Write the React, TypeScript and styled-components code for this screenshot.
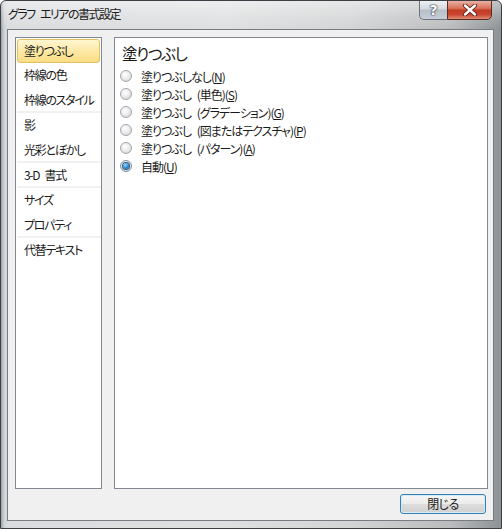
import React from "react";
import styled, { createGlobalStyle, css } from "styled-components";

const Global = createGlobalStyle`
  html, body { margin: 0; padding: 0; background: #ffffff; }
  body {
    font-family: "Noto Sans CJK JP", "Noto Sans", sans-serif;
    font-size: 12px;
    color: #000;
    font-feature-settings: "palt";
  }
  * { box-sizing: border-box; }
`;

const Window = styled.div`
  width: 502px;
  height: 529px;
  display: flex;
  flex-direction: column;
  border: 1px solid #3c3f44;
  border-radius: 6px 6px 0 0;
  overflow: hidden;
  background: linear-gradient(
    to right,
    #9aa0a6 0px,
    #cfd3d7 3px,
    #dadcdf 7px,
    #dedfe0 45%,
    #d3d4d5 70%,
    #b9bbbd 90%,
    #8f9295 100%
  );
`;

const TitleBar = styled.div`
  height: 28px;
  display: flex;
  align-items: flex-start;
  padding: 0 9px 0 7px;
  background: linear-gradient(
    to bottom,
    rgba(255, 255, 255, 0.45) 0%,
    rgba(255, 255, 255, 0.15) 60%,
    rgba(255, 255, 255, 0) 100%
  );
`;

const Title = styled.div`
  line-height: 26px;
  font-size: 12px;
  letter-spacing: -1.5px;
  word-spacing: 4px;
  color: #1a1a1a;
  flex: 1;
`;

const CaptionButton = styled.div<{ $kind: "help" | "close" }>`
  height: 20px;
  margin-top: -1px;
  display: flex;
  align-items: center;
  justify-content: center;
  ${(p) =>
    p.$kind === "help"
      ? css`
          width: 28px;
          border: 1px solid #6b737c;
          border-right: none;
          border-radius: 0 0 0 5px;
          background: linear-gradient(
            to bottom,
            #eef1f4 0%,
            #d3d9df 45%,
            #b7c0c9 50%,
            #c6ced6 100%
          );
        `
      : css`
          width: 45px;
          border: 1px solid #5b2a22;
          border-radius: 0 0 5px 0;
          background: linear-gradient(
            to bottom,
            #eab1a2 0%,
            #d9725c 40%,
            #c43b22 52%,
            #c94530 75%,
            #e18d75 100%
          );
        `}
`;

const HelpGlyph = styled.span`
  font-family: "DejaVu Sans", sans-serif;
  font-weight: bold;
  font-size: 14px;
  line-height: 14px;
  color: #ffffff;
  text-shadow: 0 0 1px #3a4048, 0 0 1px #3a4048, 0 0 2px #3a4048;
`;

const Body = styled.div`
  flex: 1;
  margin: 0 7px 7px 6px;
  border: 1px solid #777c82;
  background: #f0f0f0;
  display: flex;
  flex-direction: column;
  padding: 7px 5px 6px 7px;
`;

const Main = styled.div`
  flex: 1;
  display: flex;
  gap: 12px;
`;

const ListPanel = styled.div`
  width: 87px;
  border: 1px solid #828790;
  background: #ffffff;
  display: flex;
  flex-direction: column;
`;

const ListItem = styled.div<{ $selected?: boolean; $sep?: boolean }>`
  height: 25px;
  line-height: 24px;
  padding-left: 8px;
  white-space: nowrap;
  overflow: hidden;
  font-size: 12px;
  letter-spacing: -1.3px;
  word-spacing: 4px;
  color: #1a1a1a;
  ${(p) =>
    p.$sep &&
    css`
      margin: 0 0 0 1px;
      border-bottom: 2px solid #f1f1f1;
      padding-left: 7px;
    `}
  ${(p) =>
    p.$selected &&
    css`
      height: 24px;
      line-height: 22px;
      margin: 1px 1px 0 1px;
      padding-left: 6px;
      border: 1px solid #e2c062;
      border-radius: 3px;
      background: linear-gradient(to bottom, #fff6d2 0%, #fde9a6 50%, #fcde84 100%);
    `}
`;

const ContentPanel = styled.div`
  flex: 1;
  border: 1px solid #828790;
  background: #ffffff;
  padding: 5px 5px;
`;

const Heading = styled.div`
  font-size: 15.5px;
  line-height: 20px;
  letter-spacing: -1.3px;
  padding-left: 2px;
  color: #1a1a1a;
`;

const RadioList = styled.div`
  margin-top: 4px;
  display: flex;
  flex-direction: column;
`;

const RadioRow = styled.label`
  height: 18px;
  display: flex;
  align-items: center;
  gap: 9px;
  font-size: 12px;
  letter-spacing: -1px;
  word-spacing: 4px;
  color: #1a1a1a;
  white-space: nowrap;
`;

const RadioCircle = styled.span<{ $checked?: boolean }>`
  width: 12px;
  height: 12px;
  border-radius: 50%;
  border: 1px solid #a3a5a8;
  background: radial-gradient(circle at 40% 35%, #ffffff 0%, #ececec 45%, #cfd0d1 100%);
  display: flex;
  align-items: center;
  justify-content: center;
  flex: none;
  ${(p) =>
    p.$checked &&
    css`
      border-color: #7c8fa0;
      &::after {
        content: "";
        width: 6px;
        height: 6px;
        border-radius: 50%;
        background: radial-gradient(circle at 40% 35%, #9fdcff 0%, #2f8ad0 50%, #0f4f86 100%);
        box-shadow: 0 0 0 1px #2d5b80;
      }
    `}
`;

const Key = styled.span`
  text-decoration: underline;
`;

const Footer = styled.div`
  margin-top: 5px;
  display: flex;
  justify-content: flex-end;
  padding-right: 2px;
`;

const Button = styled.button`
  width: 86px;
  height: 20px;
  border: 1px solid #3c7fb1;
  border-radius: 3px;
  box-shadow: inset 0 0 0 1px #d2ecfb;
  background: linear-gradient(to bottom, #f6f6f6 0%, #ececec 48%, #dddddd 52%, #d0d0d0 100%);
  font-family: "Noto Sans CJK JP", "Noto Sans", sans-serif;
  font-feature-settings: "palt";
  font-size: 12px;
  letter-spacing: -0.5px;
  line-height: 16px;
  color: #1a1a1a;
  padding: 0;
`;

const CloseIcon = () => (
  <svg width="16" height="12" viewBox="0 0 16 12">
    <path d="M3 1.5 L13 10.5 M13 1.5 L3 10.5" stroke="#5a1e14" strokeWidth="4.2" strokeLinecap="round" />
    <path d="M3 1.5 L13 10.5 M13 1.5 L3 10.5" stroke="#ffffff" strokeWidth="2.4" strokeLinecap="round" />
  </svg>
);

const items: { label: string; sep?: boolean }[] = [
  { label: "塗りつぶし" },
  { label: "枠線の色" },
  { label: "枠線のスタイル", sep: true },
  { label: "影" },
  { label: "光彩とぼかし", sep: true },
  { label: "3-D 書式", sep: true },
  { label: "サイズ" },
  { label: "プロパティ", sep: true },
  { label: "代替テキスト" },
];

const options: { text: string; key: string; checked?: boolean }[] = [
  { text: "塗りつぶしなし", key: "N" },
  { text: "塗りつぶし (単色)", key: "S" },
  { text: "塗りつぶし (グラデーション)", key: "G" },
  { text: "塗りつぶし (図またはテクスチャ)", key: "P" },
  { text: "塗りつぶし (パターン)", key: "A" },
  { text: "自動", key: "U", checked: true },
];

export default function App() {
  return (
    <>
      <Global />
      <Window>
        <TitleBar>
          <Title>グラフ エリアの書式設定</Title>
          <CaptionButton $kind="help">
            <HelpGlyph>?</HelpGlyph>
          </CaptionButton>
          <CaptionButton $kind="close">
            <CloseIcon />
          </CaptionButton>
        </TitleBar>
        <Body>
          <Main>
            <ListPanel>
              {items.map((it, i) => (
                <ListItem key={it.label} $selected={i === 0} $sep={it.sep}>
                  {it.label}
                </ListItem>
              ))}
            </ListPanel>
            <ContentPanel>
              <Heading>塗りつぶし</Heading>
              <RadioList>
                {options.map((o) => (
                  <RadioRow key={o.key}>
                    <RadioCircle $checked={o.checked} />
                    <span>
                      {o.text}(<Key>{o.key}</Key>)
                    </span>
                  </RadioRow>
                ))}
              </RadioList>
            </ContentPanel>
          </Main>
          <Footer>
            <Button>閉じる</Button>
          </Footer>
        </Body>
      </Window>
    </>
  );
}
